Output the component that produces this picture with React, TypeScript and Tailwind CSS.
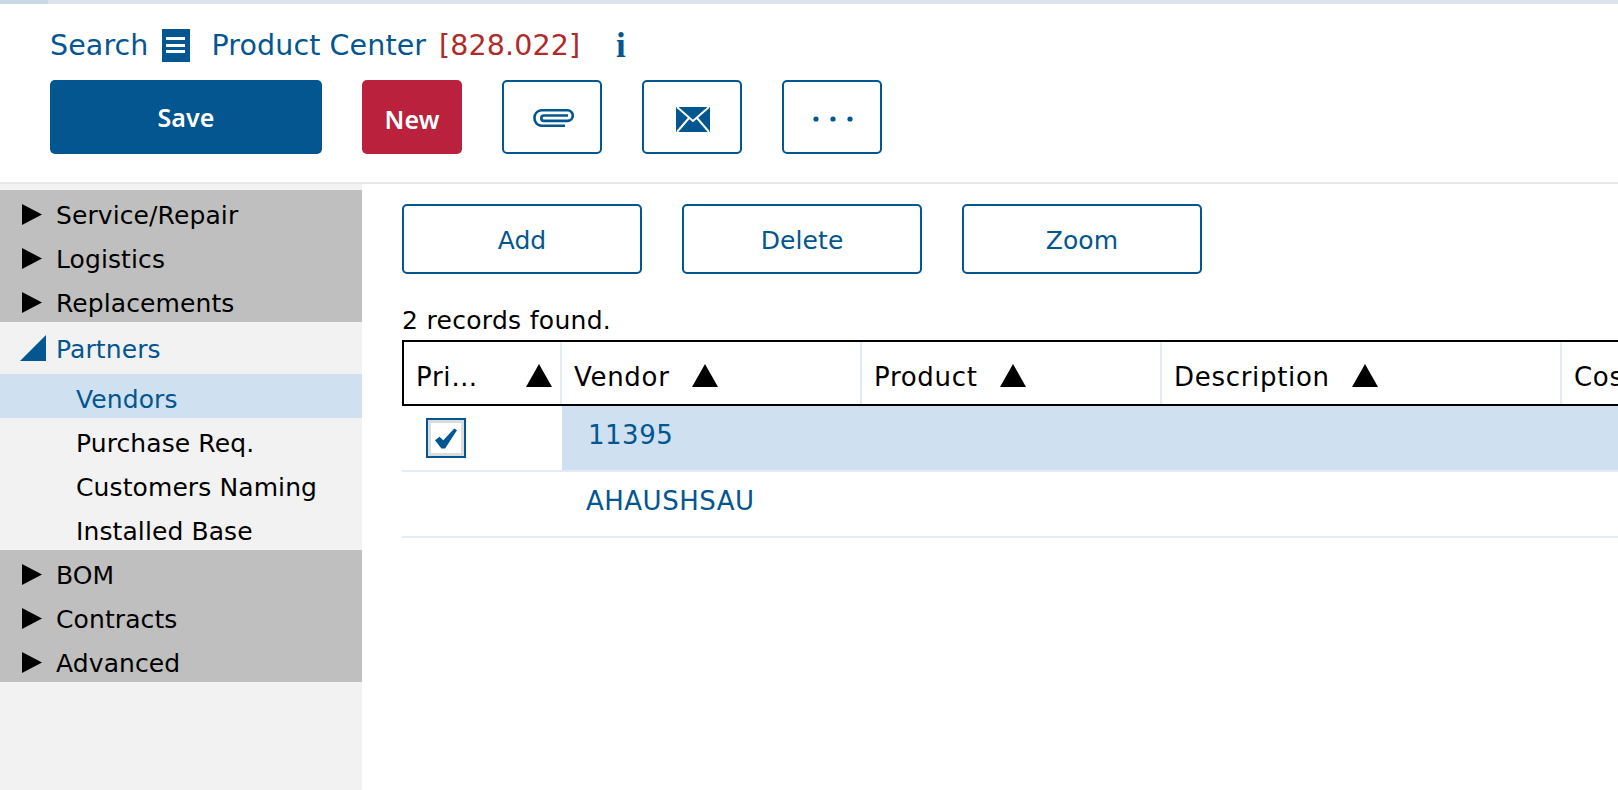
const blue = "text-[#03568f]";

function Triangle() {
  return (
    <svg width="20" height="21" viewBox="0 0 20 21" className="shrink-0 mt-[5px]">
      <polygon points="0,0 20,10.500 0,21" fill="#000" />
    </svg>
  );
}

function SortUp() {
  return (
    <svg width="26" height="23" viewBox="0 0 26 23" className="shrink-0 mt-[4px]">
      <polygon points="13,0 26,23 0,23" fill="#000" />
    </svg>
  );
}

function CollapsedRow({ label }: { label: string }) {
  return (
    <div className="h-[44px] flex items-center pl-[22px] gap-[14px] text-black">
      <Triangle />
      <span className="pt-[8px]">{label}</span>
    </div>
  );
}

function SubRow({ label, active }: { label: string; active?: boolean }) {
  return (
    <div className={`h-[44px] flex items-center pl-[76px] pt-[8px] ${active ? "bg-[#cfe0f0] text-[#03568f]" : "text-black"}`}>
      {label}
    </div>
  );
}

function HeaderCell({ label, width, sort, justify }: { label: string; width: string; sort?: boolean; justify?: boolean }) {
  return (
    <div className={`${width} shrink-0 h-full flex items-center pl-[12px] border-r-2 border-[#e4ebf5] gap-[22px] ${justify ? "justify-between pr-[8px]" : ""}`}>
      <span className="pt-[8px] text-[26px] tracking-[0.7px]">{label}</span>
      {sort && <SortUp />}
    </div>
  );
}

function OutlineButton({ label }: { label: string }) {
  return (
    <button className="w-[240px] h-[70px] border-2 border-[#03568f] rounded-[5px] text-[#03568f] bg-white pt-[3px]">
      {label}
    </button>
  );
}

function IconButton({ children }: { children: React.ReactNode }) {
  return (
    <button className="w-[100px] h-[74px] border-2 border-[#03568f] rounded-[5px] bg-white flex items-center justify-center pt-[4px] pl-[1px]">
      {children}
    </button>
  );
}

export default function App() {
  return (
    <div className="w-[1618px] h-[790px] overflow-hidden bg-white flex flex-col text-[25px] tracking-[0.1px] font-['DejaVu_Sans',sans-serif]">
      <div className="h-[4px] bg-[#dde3ec] shrink-0 flex">
        <div className="w-[48px] bg-[#c9d6e4]" />
      </div>
      <header className="h-[180px] shrink-0 px-[50px] flex flex-col border-b-2 border-[#e5e5e5]">
        <div className="h-[76px] flex items-center text-[28.5px] pt-[8px]">
          <span className={blue}>Search</span>
          <span className="ml-[13px] w-[28px] h-[33px] bg-[#03568f] flex flex-col items-center justify-center gap-[3.5px] -mt-[2px]">
            <span className="w-[19px] h-[3px] bg-white" />
            <span className="w-[19px] h-[3px] bg-white" />
            <span className="w-[19px] h-[3px] bg-white" />
          </span>
          <span className={`ml-[22px] ${blue}`}>Product Center</span>
          <span className="ml-[13px] text-[#b02a2a]">[828.022]</span>
          <span className={`ml-[36px] font-['Liberation_Serif',serif] font-bold text-[35px] ${blue}`}>i</span>
        </div>
        <div className="flex gap-[40px] font-['Noto_Sans',sans-serif]">
          <button className="w-[272px] h-[74px] bg-[#03568f] rounded-[5px] text-white font-semibold pt-[2px]">Save</button>
          <button className="w-[100px] h-[74px] bg-[#b9213d] rounded-[5px] text-white font-semibold pt-[6px]">New</button>
          <IconButton>
            <svg width="42" height="18" viewBox="0 0 42 18" fill="none" stroke="#03568f" strokeWidth="2.6" className="mb-[3px]">
              <path d="M36 6.5H12a2.7 2.7 0 0 0 0 5.400h23.500a5.200 5.200 0 0 0 0-10.600H9a7.800 7.800 0 0 0 0 15.400H33" />
            </svg>
          </IconButton>
          <IconButton>
            <svg width="34" height="25" viewBox="0 0 34 25">
              <rect width="34" height="25" fill="#03568f" />
              <path d="M1 0 L17 14 L33 0 M1 25 L13 11 M33 25 L21 11" fill="none" stroke="#fff" strokeWidth="2" />
            </svg>
          </IconButton>
          <IconButton>
            <svg width="40" height="8" viewBox="0 0 40 8" fill="#03568f">
              <circle cx="3" cy="4" r="2.600" />
              <circle cx="20" cy="4" r="2.600" />
              <circle cx="37" cy="4" r="2.600" />
            </svg>
          </IconButton>
        </div>
      </header>
      <div className="flex flex-1 min-h-0">
        <aside className="w-[362px] shrink-0 bg-[#f2f2f2] pt-[6px]">
          <div className="bg-[#bfbfbf]">
            <CollapsedRow label="Service/Repair" />
            <CollapsedRow label="Logistics" />
            <CollapsedRow label="Replacements" />
          </div>
          <div className="h-[52px] flex items-center pl-[20px] gap-[10px] text-[#03568f]">
            <svg width="26" height="26" viewBox="0 0 26 26" className="shrink-0">
              <polygon points="26,0 26,26 0,26" fill="#03568f" />
            </svg>
            <span className="pt-[4px]">Partners</span>
          </div>
          <SubRow label="Vendors" active />
          <SubRow label="Purchase Req." />
          <SubRow label="Customers Naming" />
          <SubRow label="Installed Base" />
          <div className="bg-[#bfbfbf]">
            <CollapsedRow label="BOM" />
            <CollapsedRow label="Contracts" />
            <CollapsedRow label="Advanced" />
          </div>
        </aside>
        <main className="flex-1 min-w-0 pl-[40px] pt-[20px]">
          <div className="flex gap-[40px]">
            <OutlineButton label="Add" />
            <OutlineButton label="Delete" />
            <OutlineButton label="Zoom" />
          </div>
          <div className="mt-[28px] h-[38px] text-black tracking-[0.3px]">2 records found.</div>
          <div className="h-[66px] flex border-y-2 border-l-2 border-black text-black">
            <HeaderCell label="Pri…" width="w-[158px]" sort justify />
            <HeaderCell label="Vendor" width="w-[300px]" sort />
            <HeaderCell label="Product" width="w-[300px]" sort />
            <HeaderCell label="Description" width="w-[400px]" sort />
            <HeaderCell label="Cost" width="w-[300px]" />
          </div>
          <div className="h-[66px] flex border-b-2 border-[#e4ebf5]">
            <div className="w-[160px] shrink-0 flex items-center pl-[24px]">
              <span className="w-[40px] h-[40px] border-2 border-[#03568f] flex items-center justify-center bg-white shadow-[inset_0_0_0_3px_#dcdcdc]">
                <svg width="22" height="21" viewBox="0 0 24 22">
                  <path d="M0 13 L5 9 L9 13 L21 0 L24 2 L11 22 H7 Z" fill="#03568f" />
                </svg>
              </span>
            </div>
            <div className={`flex-1 bg-[#cfe0f0] pl-[26px] pt-[10px] text-[26px] tracking-[0.5px] ${blue}`}>11395</div>
          </div>
          <div className="h-[66px] flex border-b-2 border-[#e4ebf5]">
            <div className="w-[160px] shrink-0" />
            <div className={`flex-1 pl-[24px] pt-[10px] text-[26px] tracking-[0.5px] ${blue}`}>AHAUSHSAU</div>
          </div>
        </main>
      </div>
    </div>
  );
}
